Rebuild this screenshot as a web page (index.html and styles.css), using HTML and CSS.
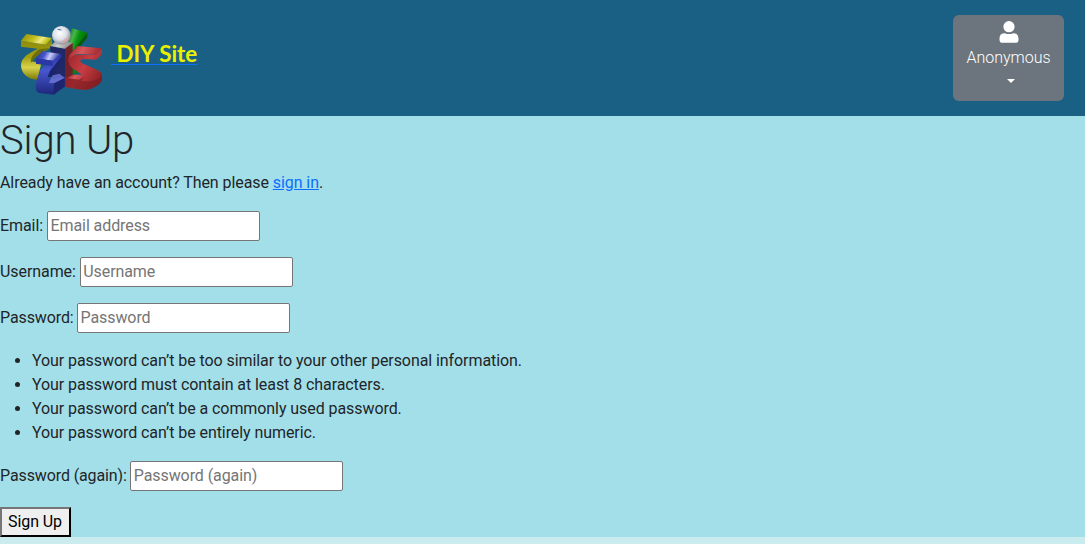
FILE: index.html
```html
<!DOCTYPE html>
<html lang="en">
<head>
<meta charset="utf-8">
<title>Sign Up</title>
<link rel="stylesheet" href="styles.css">
</head>
<body>
<header class="site-header">
  <a class="brand" href="#">
    <svg class="logo" viewBox="12 9 252 216" aria-hidden="true">
      <defs>
        <linearGradient id="yTop" x2="1" y2=".3"><stop offset="0" stop-color="#8b8a0c"/><stop offset=".5" stop-color="#c4c01c"/><stop offset=".75" stop-color="#efea80"/><stop offset="1" stop-color="#b9b50e"/></linearGradient>
        <linearGradient id="yBand" x2="0" y2="1"><stop offset="0" stop-color="#8b890a"/><stop offset=".45" stop-color="#a3a010"/><stop offset=".7" stop-color="#d8d24c"/><stop offset="1" stop-color="#7c7a08"/></linearGradient>
        <linearGradient id="green" x2="1" y2=".4"><stop offset="0" stop-color="#075b12"/><stop offset=".35" stop-color="#49b64e"/><stop offset=".6" stop-color="#07910b"/><stop offset="1" stop-color="#046b0b"/></linearGradient>
        <linearGradient id="rTop" x2="1" y2=".2"><stop offset="0" stop-color="#962228"/><stop offset=".45" stop-color="#d8585c"/><stop offset="1" stop-color="#a5272e"/></linearGradient>
        <linearGradient id="rBand" x2="1" y2=".7"><stop offset="0" stop-color="#8e2126"/><stop offset=".55" stop-color="#c83c42"/><stop offset="1" stop-color="#8a2024"/></linearGradient>
        <linearGradient id="bTop" x2="1" y2=".2"><stop offset="0" stop-color="#26319a"/><stop offset=".4" stop-color="#4a55cc"/><stop offset=".62" stop-color="#c8ccff"/><stop offset="1" stop-color="#28339a"/></linearGradient>
        <linearGradient id="bBand" x2="0" y2="1"><stop offset="0" stop-color="#28349c"/><stop offset=".4" stop-color="#4756d0"/><stop offset="1" stop-color="#1d2779"/></linearGradient>
        <linearGradient id="plate" x2="1" y2=".3"><stop offset="0" stop-color="#888"/><stop offset=".5" stop-color="#d1d0cc"/><stop offset="1" stop-color="#888"/></linearGradient>
        <radialGradient id="ball" cx=".42" cy=".38" r=".65"><stop offset="0" stop-color="#fff"/><stop offset=".55" stop-color="#dce0e6"/><stop offset="1" stop-color="#858c98"/></radialGradient>
      </defs>
      <path fill="url(#yBand)" d="M15 56L90 68L108 50V76C84 88 56 102 46 118L76 124L64 173C36 174 15 154 15 130C15 106 40 92 66 80L15 74Z"/>
      <path fill="#6f6d08" d="M70 82L100 78C76 91 54 106 46 122C40 108 56 92 70 82Z"/>
      <path fill="url(#yTop)" d="M15 56L31 36L108 48L90 68Z"/>
      <path fill="url(#green)" d="M156 58L168 19L214 32L194 60L182 82L168 88Z"/>
      <path fill="#055b0b" d="M194 57L214 32V47L190 76L170 88Z"/>
      <path fill="#087b17" d="M168 120L194 144L178 158L168 154Z"/>
      <path fill="#742028" d="M145 80L170 62V190L147 192Z"/>
      <path fill="url(#rTop)" d="M150 169L172 158L218 158L196 178Z"/>
      <path fill="url(#rBand)" d="M162 98L238 98L258 80V97L240 113L204 111C190 111 190 120 202 125L244 144C256 149 260 158 258 170C258 178 252 184 246 188L228 199C212 208 178 201 149 194V168L190 173Q204 172 206 164L172 140C156 128 152 110 162 98Z"/>
      <path fill="#7d1d22" opacity=".65" d="M206 164L190 173L149 168V194C178 201 212 208 228 199L246 188C256 182 260 174 257 162C244 176 222 182 196 176Z"/>
      <path fill="url(#rTop)" d="M160 100L184 72L258 79L238 98L190 96Q172 96 162 108Z"/>
      <path fill="#202967" d="M102 72L147 80V194L112 216Z"/>
      <path fill="url(#plate)" d="M102 72L121 56L171 62L147 80Z"/>
      <path fill="#1c2470" d="M110 116L136 96L135 116L120 140L112 164L94 166Z"/>
      <path fill="url(#bBand)" d="M60 109L110 115L136 96V104L111 136C101 144 100 154 94 166L112 172L146 166V192L113 218L70 213C56 209 58 190 62 176L72 148C76 138 85 131 96 129L60 125Z"/>
      <path fill="url(#bTop)" d="M60 109L79 88L136 96L110 116Z"/>
      <path fill="#2b37a2" d="M60 109L110 116V132L60 125Z"/>
      <path fill="#717be0" opacity=".75" d="M110 160L130 155L146 167L120 183L98 183Z"/>
      <path fill="#1d2570" d="M114 184L146 168V192L113 218Z"/>
      <circle cx="136" cy="40" r="28" fill="url(#ball)"/>
      <path fill="#ef9ca5" opacity=".55" d="M141 54L159 45C160 57 149 65 137 63Z"/>
      <path stroke="#44709f" stroke-width="3" d="M125 22L136 24"/>
    </svg>
    <span class="brand-name">&nbsp;DIY Site</span>
  </a>
  <button class="account" type="button">
    <svg class="person" viewBox="0 0 20 22" aria-hidden="true"><circle cx="10" cy="5.7" r="5.6"/><path d="M.5 19V17.4Q.5 12.2 5.8 12.2Q10 14 14.2 12.2Q19.5 12.2 19.5 17.4V19Q19.5 21.7 17.5 21.7H2.5Q.5 21.7.5 19Z"/></svg>
    <span class="account-name">Anonymous</span>
    <span class="caret"></span>
  </button>
</header>
<main class="content">
  <h1 class="title">Sign Up</h1>
  <p class="intro">Already have an account? Then please <a class="link" href="#">sign in</a>.</p>
  <form class="signup">
    <div class="field"><label for="email">Email:</label><input class="input" id="email" type="email" placeholder="Email address"></div>
    <div class="field"><label for="username">Username:</label><input class="input" id="username" type="text" placeholder="Username"></div>
    <div class="field field-password"><label for="password">Password:</label><input class="input" id="password" type="password" placeholder="Password"></div>
    <ul class="rules">
      <li>Your password can’t be too similar to your other personal information.</li>
      <li>Your password must contain at least 8 characters.</li>
      <li>Your password can’t be a commonly used password.</li>
      <li>Your password can’t be entirely numeric.</li>
    </ul>
    <div class="field field-password"><label for="again">Password (again):</label><input class="input" id="again" type="password" placeholder="Password (again)"></div>
    <button class="submit" type="submit">Sign Up</button>
  </form>
</main>
</body>
</html>
```
FILE: styles.css
```css
* { box-sizing: border-box; }
html { height: 100%; overflow: hidden; }
body {
  margin: 0;
  height: 100%;
  overflow: hidden;
  background: #cbecef;
  color: #212529;
  font: 400 16px/24px Roboto, sans-serif;
  letter-spacing: -0.073px;
}
.site-header {
  display: flex;
  justify-content: space-between;
  align-items: flex-start;
  height: 116px;
  padding: 15px 21px 0 19.5px;
  background: #1a6085;
}
.brand {
  display: flex;
  padding-top: 10px;
  gap: 7.5px;
  color: #0d6efd;
  text-decoration: none;
}
.logo { width: 84px; height: 72px; }
.brand-name {
  margin-top: 11px;
  font: 700 22.4px/36px Lato, sans-serif;
  letter-spacing: 0;
  color: #ebf000;
  text-decoration: underline #0d6efd 1px;
  text-decoration-skip-ink: none;
  text-underline-offset: 2px;
}
.account {
  display: flex;
  flex-direction: column;
  align-items: center;
  width: 111px;
  height: 86px;
  padding: 6px 0 0;
  border: 0;
  border-radius: 6px;
  background: #6c757d;
  color: #fff;
  font: 300 16px/24px Roboto, sans-serif;
}
.person { width: 20px; height: 22px; fill: #fff; }
.account-name { margin-top: 3px; }
.caret {
  margin: 9px 0 0 5px;
  border: 4px solid transparent;
  border-top-color: #fff;
  border-bottom: 0;
}
.content {
  height: 421px;
  background: #a3dfe8;
}
.title {
  margin: 0;
  height: 55px;
  font-size: 40px;
  font-weight: 300;
  line-height: 50px;
  letter-spacing: -0.15px;
}
.intro { margin: 0 0 16px; }
.link { color: #0d6efd; text-decoration: underline; }
.field {
  display: flex;
  align-items: center;
  gap: 4px;
  height: 30px;
  margin-bottom: 16px;
}
.field-password {
  gap: 3.5px;
  letter-spacing: -0.11px;
}
.input {
  width: 213px;
  height: 30px;
  padding: 0 2px 2px 2.5px;
  border: 1px solid #767676;
  border-radius: 2px;
  background: #fff;
  font: inherit;
  letter-spacing: -0.09px;
}
.input::placeholder { color: #757575; }
.rules { margin: 0 0 16px; padding-left: 32px; }
.submit {
  display: block;
  width: 71px;
  height: 30px;
  padding: 0 1px 0 0;
  border: 2px outset #767676;
  border-color: #767676 #212121 #212121 #767676;
  background: #efefef;
  color: #000;
  font: inherit;
  letter-spacing: inherit;
}
```
